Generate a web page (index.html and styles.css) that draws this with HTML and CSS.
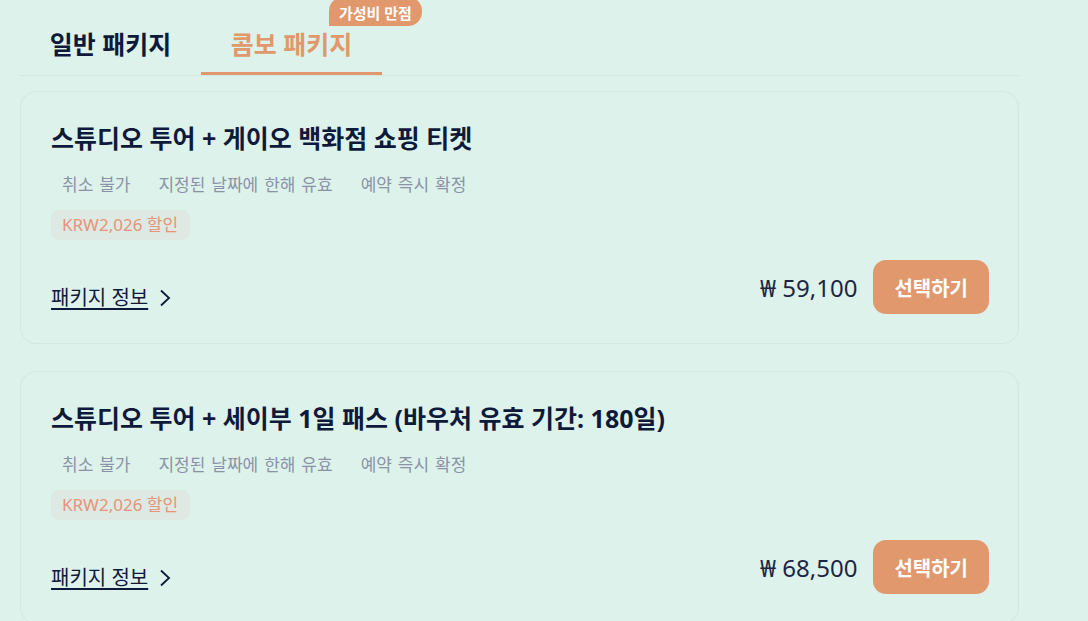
FILE: index.html
```html
<!DOCTYPE html>
<html lang="ko">
<head>
<meta charset="utf-8">
<title>패키지</title>
<link rel="stylesheet" href="styles.css">
</head>
<body>
<div class="page">
  <div class="tabs">
    <div class="tab">일반 패키지</div>
    <div class="tab active">콤보 패키지<span class="badge">가성비 만점</span></div>
  </div>

  <div class="card">
    <h2 class="title">스튜디오 투어 + 게이오 백화점 쇼핑 티켓</h2>
    <div class="chips">
      <span class="chip">취소 불가</span>
      <span class="chip">지정된 날짜에 한해 유효</span>
      <span class="chip">예약 즉시 확정</span>
    </div>
    <div class="discount">KRW2,026 할인</div>
    <div class="bottom">
      <a class="info" href="#"><span class="info-text">패키지 정보</span>
        <svg class="chev" width="12" height="18" viewBox="0 0 12 18"><polyline points="2,1.5 10,9 2,16.5" fill="none" stroke="#0f1a3a" stroke-width="1.8"/></svg>
      </a>
      <div class="buy">
        <span class="price">₩ 59,100</span>
        <button class="select">선택하기</button>
      </div>
    </div>
  </div>

  <div class="card">
    <h2 class="title">스튜디오 투어 + 세이부 1일 패스 (바우처 유효 기간: 180일)</h2>
    <div class="chips">
      <span class="chip">취소 불가</span>
      <span class="chip">지정된 날짜에 한해 유효</span>
      <span class="chip">예약 즉시 확정</span>
    </div>
    <div class="discount">KRW2,026 할인</div>
    <div class="bottom">
      <a class="info" href="#"><span class="info-text">패키지 정보</span>
        <svg class="chev" width="12" height="18" viewBox="0 0 12 18"><polyline points="2,1.5 10,9 2,16.5" fill="none" stroke="#0f1a3a" stroke-width="1.8"/></svg>
      </a>
      <div class="buy">
        <span class="price">₩ 68,500</span>
        <button class="select">선택하기</button>
      </div>
    </div>
  </div>
</div>
</body>
</html>
```

FILE: styles.css
```css
* { box-sizing: border-box; }
html, body {
  margin: 0;
  background: #ddf2eb;
  overflow: hidden;
}
body {
  font-family: "Noto Sans", "Noto Sans CJK KR", sans-serif;
  color: #0f1a3a;
}
.page {
  width: 1019px;
  padding-left: 20px;
}
.tabs {
  display: flex;
  border-bottom: 1px solid #d2e7de;
}
.tab {
  position: relative;
  width: 181px;
  text-align: center;
  padding: 28px 0 11px;
  font-size: 25px;
  line-height: 33px;
  font-weight: 700;
  color: #0f1a3a;
  border-bottom: 3px solid transparent;
}
.tab.active {
  color: #e0986c;
  border-bottom-color: #e0986c;
}
.badge {
  position: absolute;
  top: -3px;
  left: 128px;
  height: 29px;
  padding: 3px 10px 0;
  background: #e0986c;
  color: #ffffff;
  font-size: 15px;
  line-height: 26px;
  font-weight: 700;
  border-radius: 14px 14px 14px 0;
  white-space: nowrap;
}
.card {
  margin-top: 15px;
  margin-bottom: 27px;
  border: 1px solid #d3e8df;
  border-radius: 16px;
  padding: 29px 29px 29px 30px;
}
.card + .card { margin-top: 0; }
.title {
  margin: 0;
  font-size: 25px;
  line-height: 34px;
  font-weight: 700;
  color: #0f1a3a;
}
.chips {
  display: flex;
  gap: 6px;
  margin-top: 14px;
}
.chip {
  padding: 4px 11px;
  font-size: 17px;
  line-height: 24px;
  word-spacing: 1.5px;
  color: #8a93a6;
}
.discount {
  display: inline-block;
  margin-top: 9px;
  padding: 4px 12px 4px 11px;
  border-radius: 8px;
  background: #dde9e2;
  color: #e8937a;
  font-size: 17px;
  line-height: 22px;
}
.bottom {
  display: flex;
  justify-content: space-between;
  align-items: flex-end;
  margin-top: 20px;
}
.info {
  display: flex;
  align-items: center;
  gap: 11px;
  color: #0f1a3a;
  text-decoration: none;
  margin-bottom: 3px;
}
.info-text {
  font-size: 20px;
  line-height: 26px;
  text-decoration: underline;
  text-decoration-thickness: 2px;
  text-underline-offset: 3px;
}
.chev { display: block; }
.buy {
  display: flex;
  align-items: center;
  gap: 16px;
}
.price {
  font-size: 24px;
  color: #1c2544;
}
.select {
  height: 54px;
  padding: 0 21px;
  border: none;
  border-radius: 13px;
  background: #e0986c;
  color: #ffffff;
  font-family: "Noto Sans CJK KR", sans-serif;
  font-size: 20px;
  font-weight: 700;
}
```
